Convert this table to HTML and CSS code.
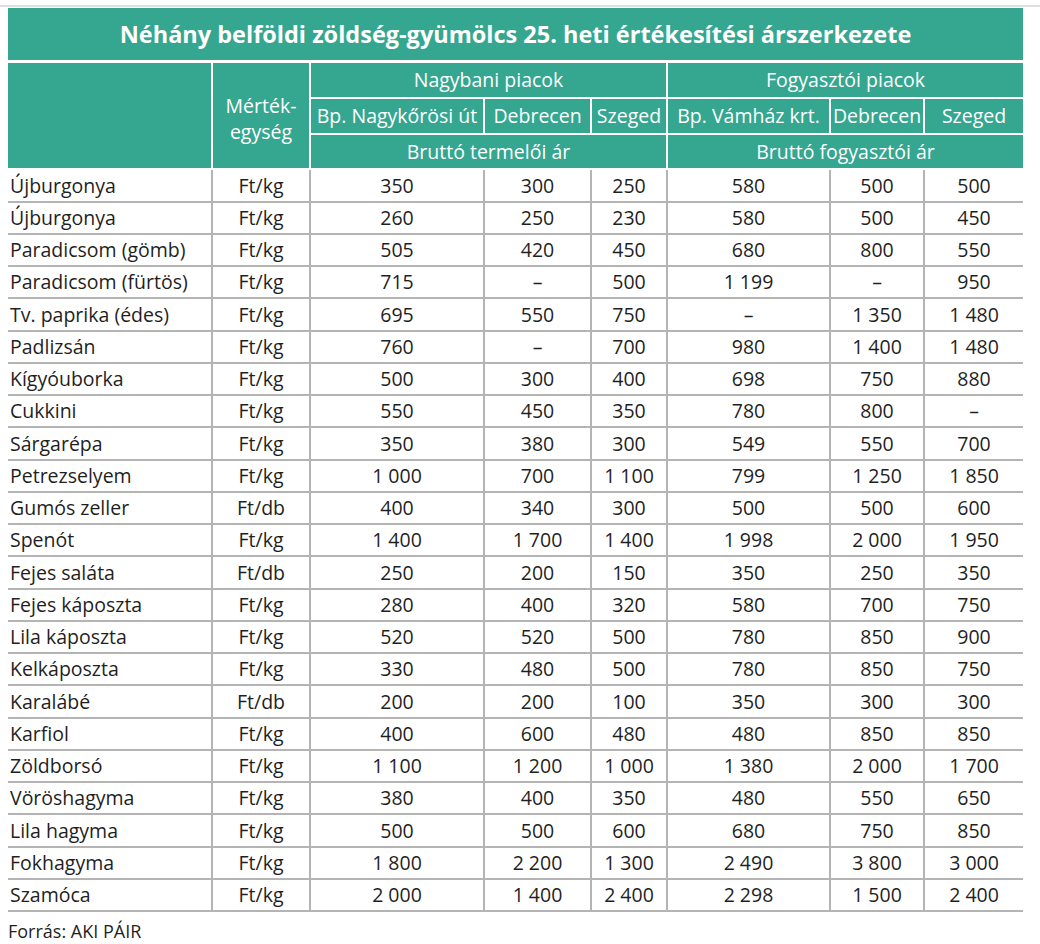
FILE: index.html
```html
<!DOCTYPE html>
<html lang="hu">
<head>
<meta charset="utf-8">
<title>Zöldség-gyümölcs árszerkezet</title>
<link rel="stylesheet" href="styles.css">
</head>
<body>
<div class="topline"></div>
<div class="wrap">
  <div class="title">Néhány belföldi zöldség-gyümölcs 25. heti értékesítési árszerkezete</div>
  <table class="prices">
    <colgroup>
      <col class="c-name"><col class="c-unit"><col class="c-bp1"><col class="c-deb1"><col class="c-sz1"><col class="c-bp2"><col class="c-deb2"><col class="c-sz2">
    </colgroup>
    <thead>
      <tr class="h1">
        <th rowspan="3" class="first"></th>
        <th rowspan="3" class="unit">Mérték-<br>egység</th>
        <th colspan="3">Nagybani piacok</th>
        <th colspan="3" class="last">Fogyasztói piacok</th>
      </tr>
      <tr class="h2">
        <th>Bp. Nagykőrösi út</th>
        <th>Debrecen</th>
        <th>Szeged</th>
        <th>Bp. Vámház krt.</th>
        <th>Debrecen</th>
        <th class="last">Szeged</th>
      </tr>
      <tr class="h3">
        <th colspan="3">Bruttó termelői ár</th>
        <th colspan="3" class="last">Bruttó fogyasztói ár</th>
      </tr>
    </thead>
    <tbody>
      <tr><td>Újburgonya</td><td>Ft/kg</td><td>350</td><td>300</td><td>250</td><td>580</td><td>500</td><td>500</td></tr>
      <tr><td>Újburgonya</td><td>Ft/kg</td><td>260</td><td>250</td><td>230</td><td>580</td><td>500</td><td>450</td></tr>
      <tr><td>Paradicsom (gömb)</td><td>Ft/kg</td><td>505</td><td>420</td><td>450</td><td>680</td><td>800</td><td>550</td></tr>
      <tr><td>Paradicsom (fürtös)</td><td>Ft/kg</td><td>715</td><td>–</td><td>500</td><td>1 199</td><td>–</td><td>950</td></tr>
      <tr><td>Tv. paprika (édes)</td><td>Ft/kg</td><td>695</td><td>550</td><td>750</td><td>–</td><td>1 350</td><td>1 480</td></tr>
      <tr><td>Padlizsán</td><td>Ft/kg</td><td>760</td><td>–</td><td>700</td><td>980</td><td>1 400</td><td>1 480</td></tr>
      <tr><td>Kígyóuborka</td><td>Ft/kg</td><td>500</td><td>300</td><td>400</td><td>698</td><td>750</td><td>880</td></tr>
      <tr><td>Cukkini</td><td>Ft/kg</td><td>550</td><td>450</td><td>350</td><td>780</td><td>800</td><td>–</td></tr>
      <tr><td>Sárgarépa</td><td>Ft/kg</td><td>350</td><td>380</td><td>300</td><td>549</td><td>550</td><td>700</td></tr>
      <tr><td>Petrezselyem</td><td>Ft/kg</td><td>1 000</td><td>700</td><td>1 100</td><td>799</td><td>1 250</td><td>1 850</td></tr>
      <tr><td>Gumós zeller</td><td>Ft/db</td><td>400</td><td>340</td><td>300</td><td>500</td><td>500</td><td>600</td></tr>
      <tr><td>Spenót</td><td>Ft/kg</td><td>1 400</td><td>1 700</td><td>1 400</td><td>1 998</td><td>2 000</td><td>1 950</td></tr>
      <tr><td>Fejes saláta</td><td>Ft/db</td><td>250</td><td>200</td><td>150</td><td>350</td><td>250</td><td>350</td></tr>
      <tr><td>Fejes káposzta</td><td>Ft/kg</td><td>280</td><td>400</td><td>320</td><td>580</td><td>700</td><td>750</td></tr>
      <tr><td>Lila káposzta</td><td>Ft/kg</td><td>520</td><td>520</td><td>500</td><td>780</td><td>850</td><td>900</td></tr>
      <tr><td>Kelkáposzta</td><td>Ft/kg</td><td>330</td><td>480</td><td>500</td><td>780</td><td>850</td><td>750</td></tr>
      <tr><td>Karalábé</td><td>Ft/db</td><td>200</td><td>200</td><td>100</td><td>350</td><td>300</td><td>300</td></tr>
      <tr><td>Karfiol</td><td>Ft/kg</td><td>400</td><td>600</td><td>480</td><td>480</td><td>850</td><td>850</td></tr>
      <tr><td>Zöldborsó</td><td>Ft/kg</td><td>1 100</td><td>1 200</td><td>1 000</td><td>1 380</td><td>2 000</td><td>1 700</td></tr>
      <tr><td>Vöröshagyma</td><td>Ft/kg</td><td>380</td><td>400</td><td>350</td><td>480</td><td>550</td><td>650</td></tr>
      <tr><td>Lila hagyma</td><td>Ft/kg</td><td>500</td><td>500</td><td>600</td><td>680</td><td>750</td><td>850</td></tr>
      <tr><td>Fokhagyma</td><td>Ft/kg</td><td>1 800</td><td>2 200</td><td>1 300</td><td>2 490</td><td>3 800</td><td>3 000</td></tr>
      <tr><td>Szamóca</td><td>Ft/kg</td><td>2 000</td><td>1 400</td><td>2 400</td><td>2 298</td><td>1 500</td><td>2 400</td></tr>
    </tbody>
  </table>
  <div class="source">Forrás: AKI PÁIR</div>
</div>
</body>
</html>
```
FILE: styles.css
```css
html, body {
  margin: 0;
  padding: 0;
  background: #ffffff;
}
body {
  font-family: "Open Sans", "Noto Sans", "DejaVu Sans", sans-serif;
  color: #1f1f1f;
}
.topline {
  margin-top: 5px;
  border-top: 2px solid #dedede;
}
.wrap {
  width: 1015px;
  padding: 1px 0 0 8px;
}
.title {
  background: #35a690;
  color: #ffffff;
  font-weight: 700;
  font-size: 23.5px;
  height: 52px;
  line-height: 52px;
  text-align: center;
  margin-bottom: 3px;
}
.prices {
  width: 1015px;
  border-collapse: collapse;
  table-layout: fixed;
  font-size: 19.5px;
}
.c-name { width: 204px; }
.c-unit { width: 98px; }
.c-bp1 { width: 174px; }
.c-deb1 { width: 107px; }
.c-sz1 { width: 76px; }
.c-bp2 { width: 163px; }
.c-deb2 { width: 94px; }
.c-sz2 { width: 99px; }

.prices th {
  background: #35a690;
  color: #ffffff;
  font-weight: 400;
  border: 2px solid #ffffff;
  padding: 0;
  text-align: center;
  white-space: nowrap;
  line-height: 28px;
}
.prices thead tr:first-child th { border-top: 0; }
.prices th.first { border-left: 0; }
.prices th.last { border-right: 0; }
.prices .h1 th { height: 34px; }
.prices .h2 th { height: 34px; }
.prices .h3 th { height: 33px; }
.prices th.unit {
  line-height: 26px;
  padding-top: 6px;
}
.prices td {
  border: 2px solid #b4b4b4;
  border-top: 0;
  padding: 0;
  height: 30px;
  line-height: 30px;
  text-align: center;
  white-space: nowrap;
}
.prices tbody tr:nth-child(4n+1) td { height: 31px; }
.prices td:first-child {
  border-left: 0;
  text-align: left;
  padding-left: 2px;
}
.prices td:last-child { border-right: 0; }
.source {
  font-size: 18px;
  margin-top: 7px;
  color: #1f1f1f;
}
```
